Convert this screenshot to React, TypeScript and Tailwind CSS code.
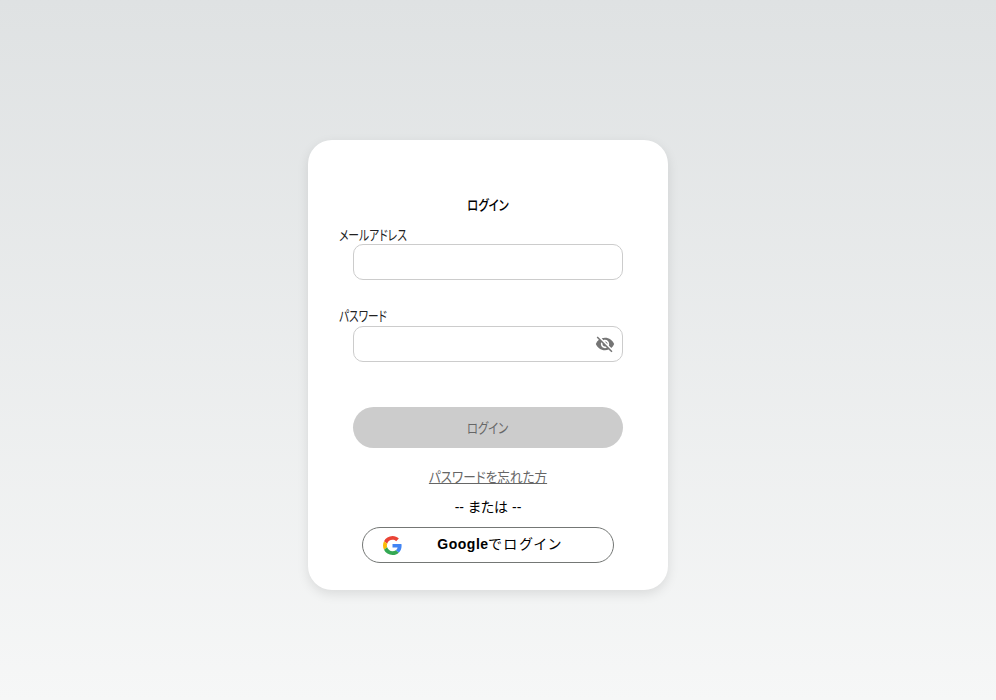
import { MdVisibilityOff } from "react-icons/md";

const font = "font-['Liberation_Sans','Noto_Sans_CJK_JP',sans-serif] [font-feature-settings:'palt']";

const GoogleLogo = () => (
  <svg width="19" height="19" viewBox="0 0 48 48" className="shrink-0">
    <path fill="#EA4335" d="M24 9.5c3.54 0 6.71 1.22 9.21 3.6l6.85-6.85C35.9 2.38 30.47 0 24 0 14.62 0 6.51 5.38 2.56 13.22l7.98 6.19C12.43 13.72 17.74 9.5 24 9.5z" />
    <path fill="#4285F4" d="M46.98 24.55c0-1.57-.15-3.09-.38-4.55H24v9.02h12.94c-.58 2.96-2.26 5.48-4.78 7.18l7.73 6c4.51-4.18 7.09-10.36 7.09-17.65z" />
    <path fill="#FBBC05" d="M10.53 28.59c-.48-1.45-.76-2.99-.76-4.59s.27-3.14.76-4.59l-7.98-6.19C.92 16.46 0 20.12 0 24c0 3.88.92 7.54 2.56 10.78l7.97-6.19z" />
    <path fill="#34A853" d="M24 48c6.48 0 11.93-2.13 15.89-5.81l-7.73-6c-2.15 1.45-4.92 2.3-8.16 2.3-6.26 0-11.57-4.22-13.47-9.91l-7.98 6.19C6.51 42.62 14.62 48 24 48z" />
  </svg>
);

export default function App() {
  return (
    <div className={`h-screen overflow-hidden bg-gradient-to-b from-[#dfe2e3] to-[#f6f7f7] ${font}`}>
      <div className="w-[976px] pt-[140px] flex justify-center">
        <div className="w-[360px] h-[450px] bg-white rounded-[24px] shadow-[0_4px_12px_rgba(0,0,0,0.1)] pt-[56px] flex flex-col">
          <h1 className="text-sm font-medium leading-[18px] text-black text-center scale-x-[.81]">ログイン</h1>

          <label className="mt-[12px] ml-[31px] text-sm leading-[18px] text-[#222] origin-left scale-x-[.77]">メールアドレス</label>
          <input type="text" className="ml-[45px] w-[270px] h-[36px] border border-[#ccc] rounded-[10px] outline-none" />

          <label className="mt-[27px] ml-[31px] text-sm leading-[18px] text-[#222] origin-left scale-x-[.76]">パスワード</label>
          <div className="relative ml-[45px] mt-[1px] w-[270px]">
            <input type="password" className="block w-full h-[36px] border border-[#ccc] rounded-[10px] outline-none" />
            <MdVisibilityOff className="absolute right-[8px] top-[8px] text-[#757575]" size={20} />
          </div>

          <button className="ml-[45px] mt-[45px] w-[270px] h-[41px] rounded-full bg-[#ccc] text-sm text-[#666]">
            <span className="inline-block scale-x-[.81]">ログイン</span>
          </button>

          <a href="#" className="mt-[20px] text-sm leading-[18px] text-[#666] text-center underline scale-x-[.9]">パスワードを忘れた方</a>

          <p className="mt-[12px] text-sm leading-[18px] text-black text-center">-- または --</p>

          <button className="ml-[54px] mt-[11px] w-[252px] h-[36px] rounded-full border border-[#747775] bg-white flex items-center pl-[20px] pr-[12px]">
            <GoogleLogo />
            <span className="flex-1 text-center text-sm leading-[18px] tracking-[2px] text-black pb-[2px] pr-[3px]">
              <span className="font-bold tracking-[0.5px]">Google</span>でログイン
            </span>
          </button>
        </div>
      </div>
    </div>
  );
}
